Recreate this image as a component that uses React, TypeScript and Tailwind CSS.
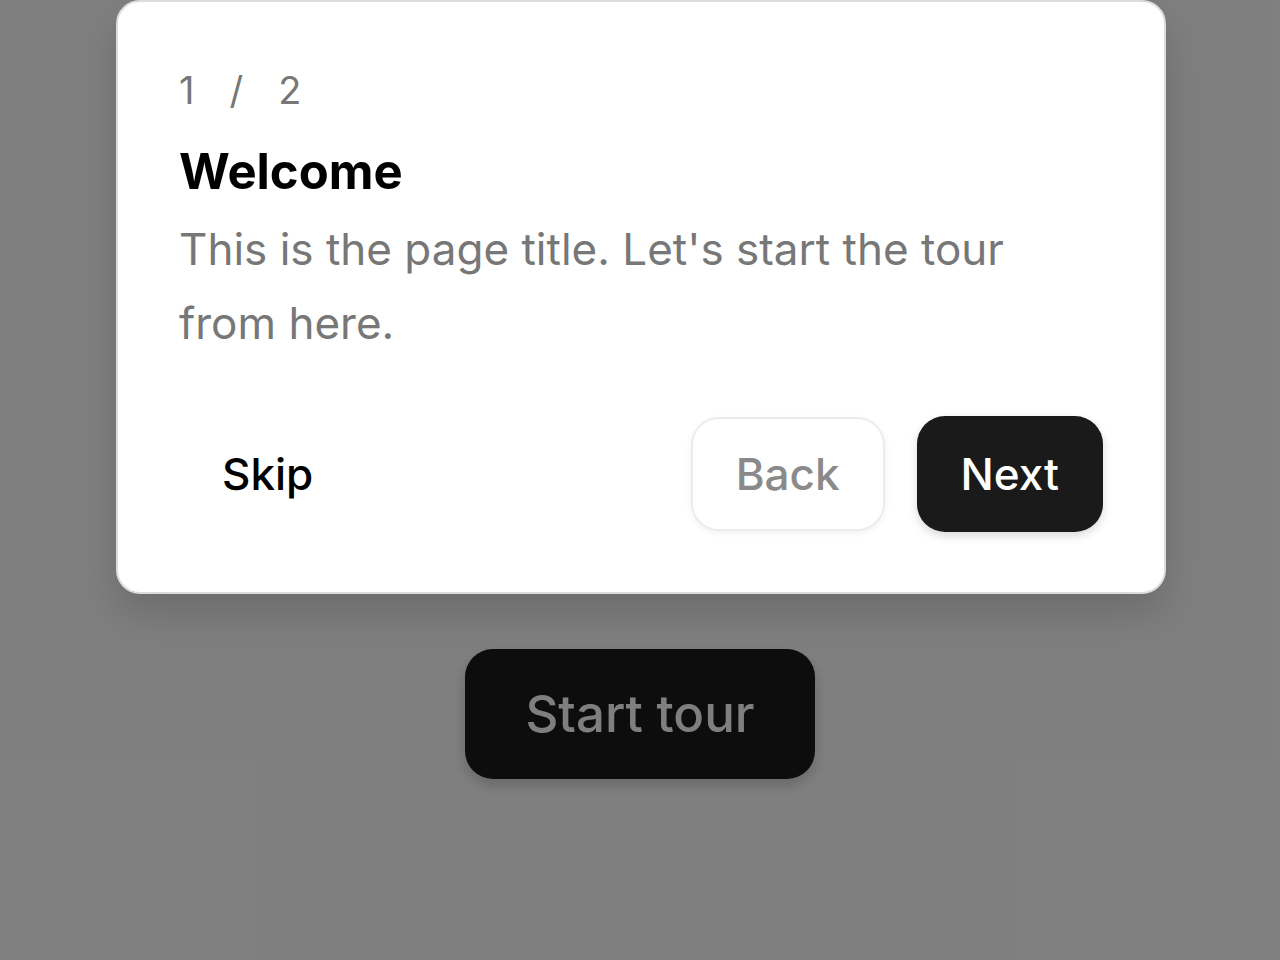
import { useState } from 'react'

const steps = [
  {
    title: 'Welcome',
    body: "This is the page title. Let's start the tour from here.",
  },
  {
    title: 'Start button',
    body: 'Press this button whenever you want to see the tour again.',
  },
]

const TourCard = ({ step, onBack, onNext }: { step: number; onBack: () => void; onNext: () => void }) => {
  const current = steps[step]
  return (
    <div className="absolute left-[116px] top-0 w-[1050px] rounded-[24px] border-2 border-[#dcdcdc] bg-white px-[61px] pt-[58px] pb-[60px] shadow-[0_20px_40px_rgba(0,0,0,0.15)]">
      <p className="text-[38px] leading-[60px] tracking-[0.32em] text-[#777]">
        {step + 1} / {steps.length}
      </p>
      {/* 제목 + 설명 */}
      <h2 className="mt-[20px] text-[49px] font-bold leading-[64px] text-black">{current.title}</h2>
      <p className="mt-[8px] text-[44px] leading-[74px] text-[#777]">{current.body}</p>

      {/* 버튼 */}
      <div className="mt-[56px] flex items-center justify-between">
        <button className="h-[116px] px-[43px] text-[44px] font-medium text-black">Skip</button>
        <div className="flex items-center gap-[32px]">
          <button
            onClick={onBack}
            disabled={step === 0}
            className="h-[114px] rounded-[28px] border-2 border-[#ececec] bg-white px-[43px] text-[44px] font-medium text-[#8a8a8a] shadow-[0_2px_6px_rgba(0,0,0,0.06)]"
          >
            Back
          </button>
          <button
            onClick={onNext}
            className="h-[116px] rounded-[28px] bg-[#1a1a1a] px-[44px] text-[44px] font-medium text-white shadow-[0_4px_10px_rgba(0,0,0,0.15)]"
          >
            Next
          </button>
        </div>
      </div>
    </div>
  )
}

export default function App() {
  const [step, setStep] = useState(0)

  return (
    <div className="relative h-[960px] w-full overflow-hidden bg-white font-['Inter','Liberation_Sans',sans-serif]">
      <div className="flex flex-col items-center pt-[649px]">
        <button className="h-[130px] w-[350px] rounded-[28px] bg-[#1a1a1a] text-[51px] font-medium text-white shadow-[0_6px_14px_rgba(0,0,0,0.2)]">
          Start tour
        </button>
      </div>
      <div className="absolute inset-0 bg-black/50" />
      <TourCard
        step={step}
        onBack={() => setStep((s) => Math.max(0, s - 1))}
        onNext={() => setStep((s) => Math.min(steps.length - 1, s + 1))}
      />
    </div>
  )
}
